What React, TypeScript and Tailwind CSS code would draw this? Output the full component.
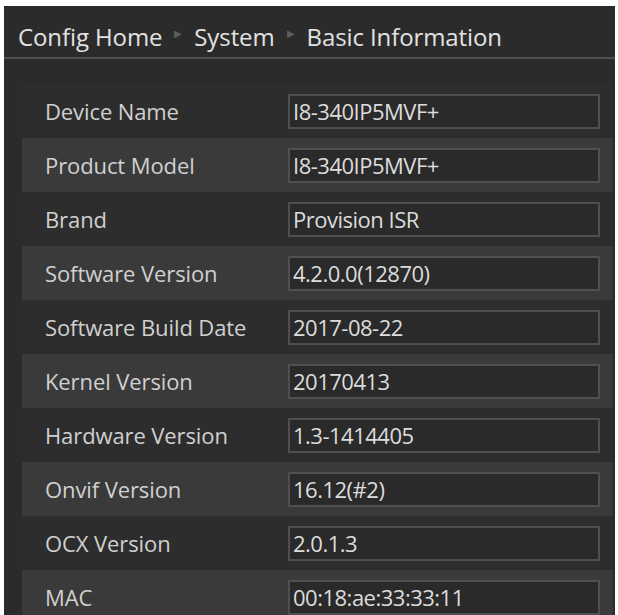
import React from 'react';

const rows = [
  ['Device Name', 'I8-340IP5MVF+'],
  ['Product Model', 'I8-340IP5MVF+'],
  ['Brand', 'Provision ISR'],
  ['Software Version', '4.2.0.0(12870)'],
  ['Software Build Date', '2017-08-22'],
  ['Kernel Version', '20170413'],
  ['Hardware Version', '1.3-1414405'],
  ['Onvif Version', '16.12(#2)'],
  ['OCX Version', '2.0.1.3'],
  ['MAC', '00:18:ae:33:33:11'],
];

function Crumb() {
  return <span className="mx-[12px] text-[10px] text-[#5e5e5e] relative top-[-3px]">&#9654;</span>;
}

export default function App() {
  return (
    <div className="w-[618px] h-[615px] overflow-hidden bg-white pl-[4px] pt-[6px] font-['Open_Sans','Noto_Sans',sans-serif]">
      <div className="w-[611px] h-[620px] bg-[#2b2b2b]">
        <div className="h-[53px] flex items-center pt-[10px] pl-[14px] border-b-2 border-[#4e4e4e] text-[24px] text-[#e2e2e2] tracking-[-0.1px]">
          <span>Config Home</span>
          <Crumb />
          <span>System</span>
          <Crumb />
          <span>Basic Information</span>
        </div>
        <div className="pt-[25px] pl-[18px] pr-[2px]">
          {rows.map(([label, value], i) => (
            <div
              key={label}
              className={`h-[54px] flex items-center ${i % 2 === 1 ? 'bg-[#3a3a3a]' : 'bg-[#2d2d2d]'}`}
            >
              <div className="w-[266px] pl-[23px] text-[22px] text-[#d0d0d0] tracking-[-0.1px]">{label}</div>
              <div className="w-[312px] h-[35px] border-2 border-[#4f4f4f] bg-[#2a2a2a] flex items-center pl-[3px] text-[22px] text-[#dcdcdc] tracking-[-0.5px]">
                {value}
              </div>
            </div>
          ))}
        </div>
      </div>
    </div>
  );
}
